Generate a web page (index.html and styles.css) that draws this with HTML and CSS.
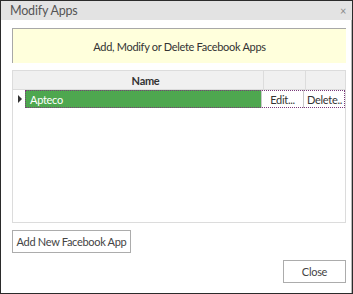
FILE: index.html
```html
<!DOCTYPE html>
<html lang="en">
<head>
    <meta charset="UTF-8">
    <title>Modify Apps</title>
    <link rel="stylesheet" href="styles.css">
</head>
<body>
    <div class="dialog">
        <div class="titlebar">
            <span class="title">Modify Apps</span>
            <span class="close-x">&#215;</span>
        </div>
        <div class="content">
            <div class="banner">Add, Modify or Delete Facebook Apps</div>

            <div class="grid">
                <div class="grid-head">
                    <div class="cell-indicator"></div>
                    <div class="cell-name">Name</div>
                    <div class="cell-btn"></div>
                    <div class="cell-btn last"></div>
                </div>
                <div class="grid-row">
                    <div class="cell-indicator"><span class="arrow"></span></div>
                    <div class="row-focus">
                        <div class="cell-name selected">Apteco</div>
                        <div class="cell-btn action">Edit...</div>
                        <div class="cell-btn action last">Delete..</div>
                    </div>
                </div>
            </div>

            <button class="btn add-btn">Add New Facebook App</button>
            <div class="footer">
                <button class="btn close-btn">Close</button>
            </div>
        </div>
    </div>
</body>
</html>
```

FILE: styles.css
```css
html, body {
    margin: 0;
    padding: 0;
}
body {
    font-family: Lato, "Noto Sans", sans-serif;
    font-size: 11px;
    letter-spacing: -0.3px;
    color: #333333;
    background-color: #ffffff;
}
.dialog {
    width: 353px;
    height: 294px;
    box-sizing: border-box;
    border: 1px solid #2b2b2b;
    display: flex;
    flex-direction: column;
}
.titlebar {
    height: 19px;
    background-color: #e3e3e3;
    display: flex;
    align-items: center;
    justify-content: space-between;
    padding: 0 6px 0 9px;
}
.title {
    font-size: 12.5px;
    letter-spacing: -0.2px;
    color: #555555;
}
.close-x {
    font-size: 11px;
    color: #8a8a8a;
}
.content {
    flex: 1;
    padding: 8px 5px 0 11px;
    border-right: 1px solid #b8b8b8;
    display: flex;
    flex-direction: column;
}
.banner {
    height: 34px;
    background-color: #ffffdc;
    border-left: 1px solid #a8a8a8;
    border-top: 1px solid #a8a8a8;
    display: flex;
    align-items: center;
    justify-content: center;
    color: #333333;
}
.grid {
    margin-top: 7px;
    height: 153px;
    border: 1px solid #dcdcdc;
    box-sizing: border-box;
}
.grid-head, .grid-row {
    display: flex;
    height: 18px;
}
.grid-head {
    background-color: #f0f0f0;
    border-bottom: 1px solid #dcdcdc;
}
.grid-head .cell-name {
    font-weight: bold;
    justify-content: center;
    border-right: 1px solid #dcdcdc;
}
.grid-head .cell-btn {
    border-right: 1px solid #dcdcdc;
}
.cell-indicator {
    width: 15px;
    display: flex;
    align-items: center;
    justify-content: center;
}
.arrow {
    width: 0;
    height: 0;
    margin-left: 2px;
    border-top: 4px solid transparent;
    border-bottom: 4px solid transparent;
    border-left: 4px solid #333333;
}
.cell-name {
    width: 236px;
    display: flex;
    align-items: center;
    box-sizing: border-box;
}
.cell-btn {
    width: 42px;
    display: flex;
    align-items: center;
    justify-content: center;
    box-sizing: border-box;
}
.cell-btn.last {
    flex: 1;
    border-right: none;
}
.row-focus {
    flex: 1;
    display: flex;
    outline: 1px dotted #7a3a7a;
    outline-offset: -1px;
}
.selected {
    background-color: #4ea74f;
    color: #ffffff;
    padding-left: 5px;
}
.action {
    background-color: #ffffff;
    border-left: 1px solid #c8c8c8;
    color: #333333;
}
.btn {
    font-family: Lato, "Noto Sans", sans-serif;
    font-size: 11px;
    letter-spacing: -0.3px;
    color: #444444;
    background-color: #ffffff;
    border: 1px solid #acacac;
    padding: 0;
    height: 23px;
    white-space: nowrap;
}
.add-btn {
    margin-top: 7px;
    width: 119px;
}
.footer {
    display: flex;
    justify-content: flex-end;
    margin-top: 7px;
}
.close-btn {
    width: 63px;
}
```
